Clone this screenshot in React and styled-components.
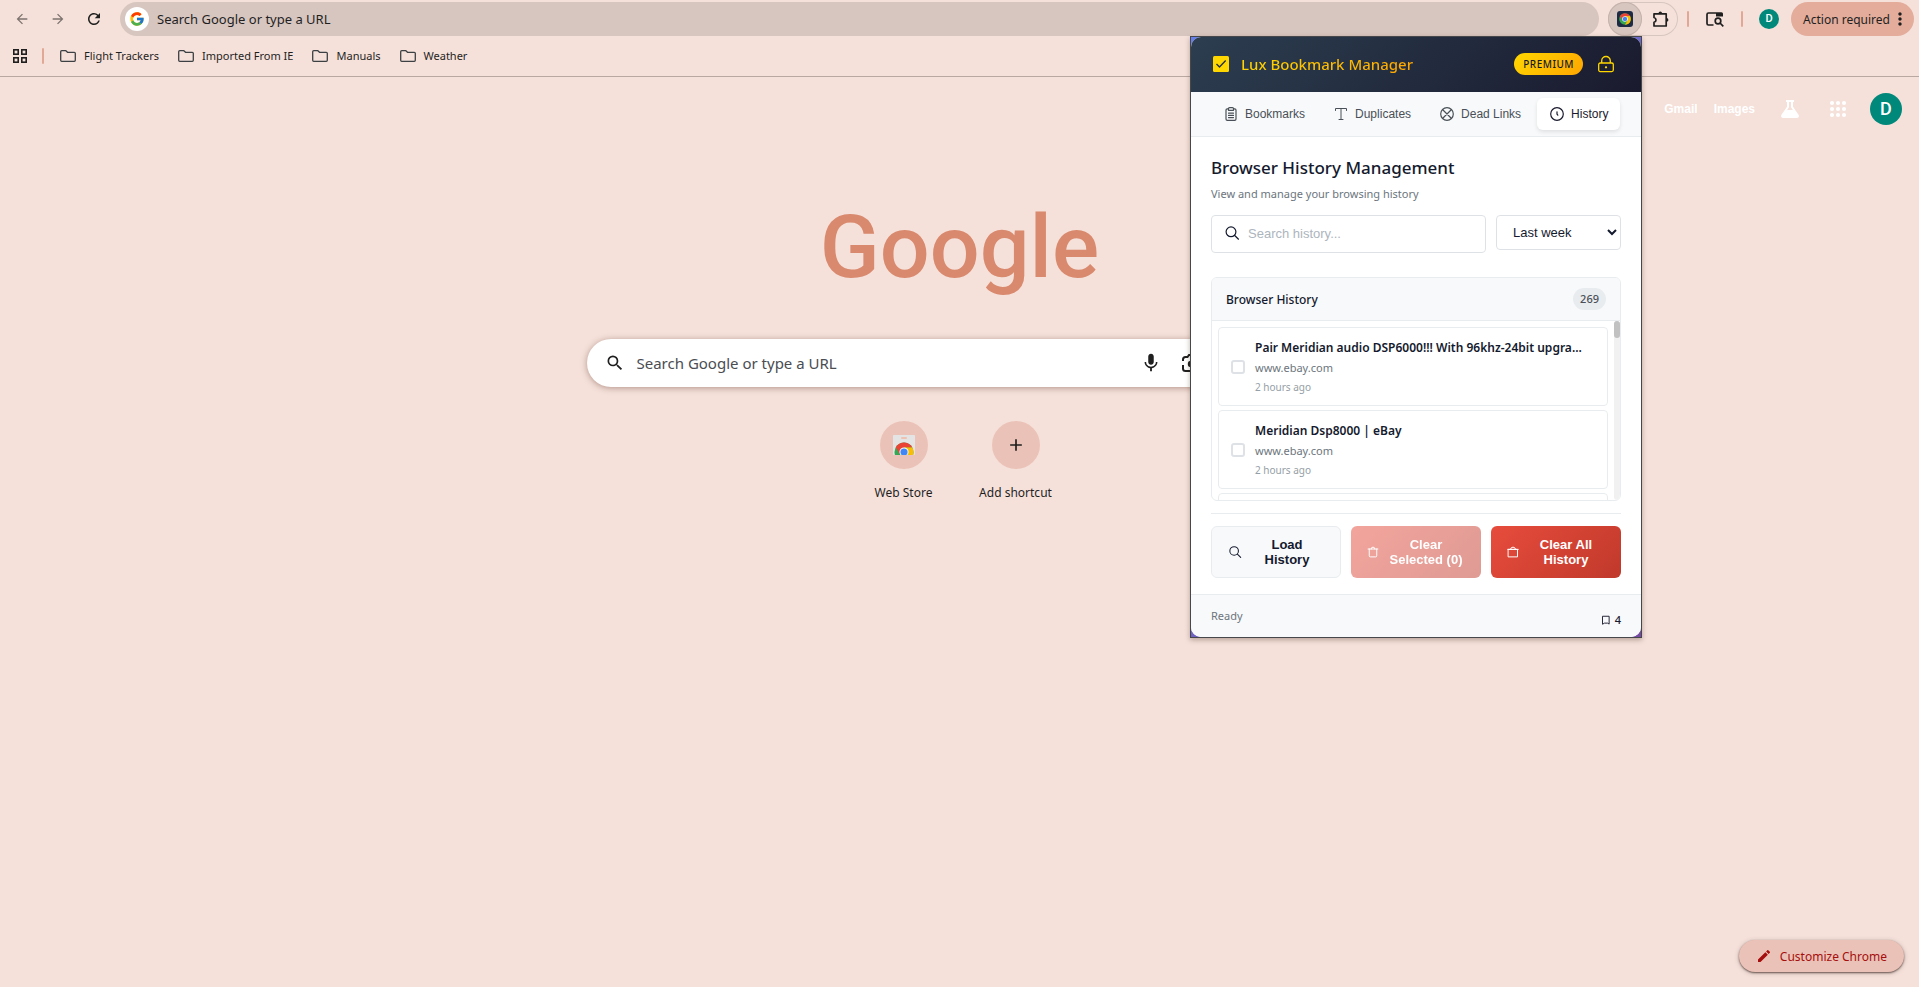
import React from "react";
import styled, { createGlobalStyle, css } from "styled-components";
import {
  MdArrowBack,
  MdArrowForward,
  MdRefresh,
  MdMoreVert,
  MdSearch,
  MdMic,
  MdAdd,
  MdEdit,
} from "react-icons/md";
import { FcGoogle } from "react-icons/fc";

const ui = `"Noto Sans", "Open Sans", sans-serif`;
const arial = `"Liberation Sans", Arial, sans-serif`;

const GlobalStyle = createGlobalStyle`
  * { box-sizing: border-box; }
  body { margin: 0; background: #f5e1da; font-family: ${ui}; color: #1f1f1f; }
  button, input, select { font: inherit; color: inherit; margin: 0; }
  button { border: 0; padding: 0; background: none; cursor: pointer; }
  a { color: inherit; text-decoration: none; }
  h1, h2, h3, p, ul { margin: 0; padding: 0; }
  ul { list-style: none; }
  svg { display: block; flex: none; }
`;

const Page = styled.div`
  position: relative;
  display: flex;
  flex-direction: column;
  min-height: 100vh;
`;

/* Browser chrome */

const Toolbar = styled.header`
  display: flex;
  align-items: center;
  height: 36px;
  padding: 2px 5px 0 12px;
`;

const NavButtons = styled.div`
  display: flex;
  gap: 16px;
  margin-right: 16px;
`;

const NavButton = styled.button`
  display: grid;
  place-items: center;
  width: 20px;
  height: 20px;
  color: ${(p) => (p.$dim ? "#7d736f" : "#1f1f1f")};
`;

const Omnibox = styled.label`
  flex: 1;
  display: flex;
  align-items: center;
  gap: 8px;
  height: 34px;
  padding: 0 5px;
  border-radius: 17px;
  background: #d7c6bf;
`;

const EngineBadge = styled.span`
  display: grid;
  place-items: center;
  width: 24px;
  height: 24px;
  border-radius: 50%;
  background: #fff;
`;

const OmniboxInput = styled.input`
  flex: 1;
  min-width: 0;
  border: 0;
  padding: 0;
  outline: 0;
  background: none;
  font-size: 13px;
  line-height: 20px;
  &::placeholder { color: #1f1f1f; opacity: 1; }
`;

const ToolbarEnd = styled.div`
  display: flex;
  align-items: center;
  margin-left: 9px;
`;

const ExtensionPill = styled.div`
  display: flex;
  gap: 2px;
  height: 34px;
  width: 70px;
  border-radius: 17px;
  box-shadow: inset 0 0 0 1px #d7c6bf;
`;

const ExtensionButton = styled.button`
  display: grid;
  place-items: center;
  width: 34px;
  height: 34px;
  border-radius: 50%;
  background: ${(p) => (p.$active ? "#d7c6bf" : "transparent")};
  box-shadow: ${(p) => (p.$active ? "inset 0 0 0 1px #c4b3ac" : "none")};
`;

const Divider = styled.span`
  width: 2px;
  height: 16px;
  border-radius: 1px;
  background: #e2a896;
`;

const ToolbarTools = styled.div`
  display: flex;
  align-items: center;
  gap: 9px;
  margin: 0 16px 0 9px;
`;

const ToolbarButton = styled.button`
  display: grid;
  place-items: center;
  width: 34px;
  height: 34px;
`;

const Avatar = styled.button`
  display: grid;
  place-items: center;
  width: ${(p) => p.$size}px;
  height: ${(p) => p.$size}px;
  border-radius: 50%;
  background: #00897b;
  color: #fff;
  font-family: Roboto, sans-serif;
  font-size: ${(p) => (p.$size > 24 ? 18 : 11)}px;
  font-weight: 500;
  line-height: 20px;
`;

const ActionButton = styled.button`
  display: flex;
  align-items: center;
  height: 34px;
  margin-left: 12px;
  padding: 0 4px 0 12px;
  border-radius: 17px;
  background: #e3ac9b;
  font-size: 12px;
  white-space: nowrap;
`;

const BookmarksBar = styled.nav`
  display: flex;
  align-items: center;
  height: 41px;
  padding: 0 12px;
  border-bottom: 1px solid #b9a8a2;
  & > ${Divider} { margin: 0 16px 0 14px; }
`;

const BookmarkList = styled.ul`
  display: flex;
  gap: 19px;
`;

const BookmarkLink = styled.a`
  display: flex;
  align-items: center;
  gap: 8px;
  line-height: 20px;
  font-size: 11px;
`;

/* New tab page */

const Main = styled.main`
  flex: 1;
  display: flex;
  flex-direction: column;
  align-items: center;
`;

const AccountBar = styled.nav`
  align-self: flex-end;
  display: flex;
  align-items: center;
  height: 64px;
  padding-right: 17px;
  color: #fff;
  font-family: ${arial};
  font-size: 12px;
  font-weight: 700;
  & > ${Avatar} { margin-left: 8px; }
`;

const AccountLinks = styled.div`
  display: flex;
  gap: 16px;
  margin-right: 11px;
`;

const AccountIcon = styled.button`
  display: grid;
  place-items: center;
  width: 48px;
  height: 40px;
`;

const Wordmark = styled.h1`
  margin-top: 48px;
  font-family: Roboto, ${arial};
  font-size: 88px;
  font-weight: 500;
  line-height: 116px;
  color: #d9896d;
`;

const SearchBox = styled.label`
  display: flex;
  align-items: center;
  width: 746px;
  max-width: 90%;
  height: 48px;
  margin-top: 34px;
  padding: 0 20px 0 18px;
  border-radius: 24px;
  background: #fff;
  box-shadow: 0 1px 6px rgba(110, 70, 55, 0.5);
`;

const SearchInput = styled.input`
  flex: 1;
  min-width: 0;
  margin-left: 12px;
  border: 0;
  padding: 0;
  outline: 0;
  font-size: 15px;
  line-height: 24px;
  &::placeholder { color: #4a4d52; opacity: 1; }
`;

const IconButton = styled.button`
  display: grid;
  place-items: center;
  width: 24px;
  height: 24px;
`;

const SearchTools = styled.div`
  display: flex;
  gap: 16px;
  margin-right: 110px;
`;

const Shortcuts = styled.div`
  display: flex;
  margin-top: 34px;
`;

const Shortcut = styled.button`
  display: flex;
  flex-direction: column;
  align-items: center;
  gap: 14px;
  width: 112px;
  font-size: 12px;
  line-height: 20px;
`;

const ShortcutIcon = styled.span`
  display: grid;
  place-items: center;
  width: 48px;
  height: 48px;
  border-radius: 50%;
  background: #ebc2b7;
`;

const CustomizeButton = styled.button`
  align-self: flex-end;
  display: flex;
  align-items: center;
  gap: 8px;
  height: 32px;
  margin: auto 15px 15px 0;
  padding: 0 17px;
  border-radius: 16px;
  background: #ebc2b7;
  box-shadow: 0 1px 2px rgba(60, 40, 35, 0.7), 0 1px 5px rgba(60, 40, 35, 0.25);
  color: #a50e0e;
  font-size: 12px;
`;

/* Extension popup */

const Popup = styled.aside`
  position: absolute;
  top: 36px;
  right: 277px;
  width: 452px;
  border: 1px solid #45474a;
  background: linear-gradient(135deg, #667eea 0%, #764ba2 100%);
  box-shadow: 0 2px 5px rgba(70, 40, 30, 0.35);
`;

const PopupBody = styled.div`
  overflow: hidden;
  border-radius: 10px;
  background: #fff;
  color: #141a2e;
`;

const PopupHeader = styled.header`
  display: flex;
  align-items: center;
  height: 55px;
  padding: 0 26px 2px 22px;
  background: linear-gradient(135deg, #2c3e50 0%, #1a1a2e 100%);
`;

const PopupTitle = styled.h2`
  flex: 1;
  margin-left: 12px;
  font-size: 15px;
  font-weight: 500;
  line-height: 24px;
  & > span {
    background: linear-gradient(135deg, #ffd700, #ffa500);
    background-clip: text;
    color: transparent;
  }
`;

const Premium = styled.span`
  margin-right: 14px;
  padding: 0 9px;
  border-radius: 11px;
  background: linear-gradient(135deg, #ffd700, #ffa500);
  font-size: 10px;
  font-weight: 500;
  line-height: 22px;
  letter-spacing: 0.5px;
`;

const Tabs = styled.nav`
  display: flex;
  gap: 4px;
  height: 45px;
  padding: 6px 20px;
  border-bottom: 1px solid #e9ecef;
  background: #f8f9fa;
`;

const Tab = styled.button`
  display: flex;
  align-items: center;
  gap: 6px;
  height: 32px;
  padding: 0 12px;
  border-radius: 6px;
  font-family: ${arial};
  font-size: 12px;
  color: #495057;
  ${(p) =>
    p.$active &&
    css`
      background: #fff;
      color: #1a1a2e;
      box-shadow: 0 2px 4px rgba(0, 0, 0, 0.1);
    `}
`;

const Panel = styled.section`
  padding: 18px 20px 16px;
`;

const PanelTitle = styled.h3`
  font-size: 17px;
  font-weight: 500;
  line-height: 26px;
`;

const PanelNote = styled.p`
  margin-top: 3px;
  font-size: 11px;
  line-height: 20px;
  color: #6c757d;
`;

const Filters = styled.div`
  display: flex;
  align-items: flex-start;
  gap: 10px;
  margin-top: 11px;
`;

const field = css`
  border: 1px solid #dee2e6;
  border-radius: 4px;
  background: #fff;
  font-family: ${arial};
  font-size: 13px;
`;

const HistorySearch = styled.label`
  ${field}
  flex: 1;
  display: flex;
  align-items: center;
  gap: 8px;
  height: 38px;
  padding: 0 12px 2px;
`;

const HistoryInput = styled.input`
  flex: 1;
  min-width: 0;
  border: 0;
  padding: 0;
  outline: 0;
  &::placeholder { color: #adb5bd; opacity: 1; }
`;

const Range = styled.select`
  ${field}
  width: 125px;
  height: 35px;
  padding: 0 0 0 12px;
`;

const Card = styled.div`
  margin-top: 24px;
  overflow: hidden;
  border: 1px solid #e9ecef;
  border-radius: 6px;
`;

const CardHeader = styled.div`
  display: flex;
  align-items: center;
  justify-content: space-between;
  height: 43px;
  padding: 0 14px;
  border-bottom: 1px solid #e9ecef;
  background: #f8f9fa;
  font-size: 12px;
  font-weight: 500;
`;

const Count = styled.span`
  padding: 0 7px;
  border-radius: 11px;
  background: #e9ecef;
  font-size: 11px;
  font-weight: 500;
  line-height: 22px;
  color: #495057;
`;

const CardBody = styled.div`
  display: flex;
  height: 179px;
`;

const Entries = styled.ul`
  flex: 1;
  min-width: 0;
  display: flex;
  flex-direction: column;
  gap: 4px;
  padding: 6px;
  overflow: hidden;
`;

const ScrollTrack = styled.div`
  width: 6px;
  border-radius: 3px;
  background: #f1f1f1;
`;

const ScrollThumb = styled.div`
  height: 17px;
  border-radius: 3px;
  background: #c1c1c1;
`;

const Entry = styled.li`
  flex: none;
  display: flex;
  align-items: center;
  gap: 10px;
  padding: 10px 12px 9px;
  border: 1px solid #e9ecef;
  border-radius: 4px;
`;

const EntryCheck = styled.input`
  flex: none;
  appearance: none;
  width: 14px;
  height: 14px;
  border: 2px solid #dee2e6;
  border-radius: 3px;
`;

const EntryText = styled.label`
  flex: 1;
  min-width: 0;
  display: flex;
  flex-direction: column;
  line-height: 20px;
`;

const EntryTitle = styled.span`
  white-space: nowrap;
  font-size: 12px;
  font-weight: 600;
`;

const EntryHost = styled.span`
  font-size: 11px;
  color: #6c757d;
`;

const EntryTime = styled.span`
  font-size: 10px;
  line-height: 18px;
  color: #95a0a6;
`;

const Actions = styled.div`
  display: grid;
  grid-template-columns: repeat(3, 1fr);
  gap: 10px;
  margin-top: 12px;
  padding-top: 12px;
  border-top: 1px solid #e9ecef;
`;

const ActionCard = styled.button`
  display: flex;
  align-items: center;
  gap: 8px;
  height: 52px;
  padding: 0 16px;
  border-radius: 6px;
  font-family: ${arial};
  font-size: 13px;
  font-weight: 700;
  line-height: 15px;
  & > span { flex: 1; }
  ${(p) =>
    p.$danger
      ? css`
          background: linear-gradient(135deg, #e74c3c, #c0392b);
          color: #fff;
        `
      : css`
          border: 1px solid #e9ecef;
          background: #f8f9fa;
        `}
  &:disabled { opacity: 0.5; }
`;

const PopupFooter = styled.footer`
  display: flex;
  justify-content: space-between;
  height: 43px;
  padding: 11px 20px 0;
  border-top: 1px solid #e9ecef;
  background: #f8f9fa;
  font-size: 11px;
  line-height: 20px;
  color: #6c757d;
`;

const SavedCount = styled.span`
  display: flex;
  align-items: center;
  align-self: flex-end;
  gap: 4px;
  padding-bottom: 7px;
  font-weight: 500;
  color: #1a1a2e;
`;

/* Drawings */

const Line = ({ size = 16, width = 1, children }) => (
  <svg
    width={size}
    height={size}
    viewBox="0 0 16 16"
    fill="none"
    stroke="currentColor"
    strokeWidth={width}
    strokeLinecap="round"
    strokeLinejoin="round"
    aria-hidden="true"
  >
    {children}
  </svg>
);

const GridIcon = () => (
  <svg width="16" height="16" viewBox="0 0 16 16" fill="none" stroke="#1f1f1f" strokeWidth="1.6" aria-hidden="true">
    <rect x="1.8" y="1.8" width="4.4" height="4.4" />
    <rect x="9.8" y="1.8" width="4.4" height="4.4" />
    <rect x="1.8" y="9.8" width="4.4" height="4.4" />
    <rect x="9.8" y="9.8" width="4.4" height="4.4" />
  </svg>
);

const DotsIcon = () => (
  <svg width="24" height="24" viewBox="0 0 24 24" fill="currentColor" aria-hidden="true">
    {[6, 12, 18].map((y) => [6, 12, 18].map((x) => <circle key={`${x}${y}`} cx={x} cy={y} r="2.1" />))}
  </svg>
);

const FlaskIcon = () => (
  <svg width="24" height="24" viewBox="0 0 24 24" fill="none" stroke="currentColor" strokeWidth="2" strokeLinejoin="round" aria-hidden="true">
    <path d="M8 4h8M10 4v6L4.300 18.200q-.8 1.800 1 1.800h13.400q1.800 0 1-1.800L14 10V4" />
    <path d="M9 14h6l4 5H5z" fill="currentColor" />
  </svg>
);

const FolderIcon = () => (
  <svg width="16" height="16" viewBox="0 0 16 16" fill="none" stroke="#3c4043" strokeWidth="1.3" strokeLinejoin="round" aria-hidden="true">
    <path d="M1.700 2.700h4.200l1.600 1.600h6.800q1 0 1 1v7q0 1-1 1H1.700q-1 0-1-1V3.700q0-1 1-1z" />
  </svg>
);

const PuzzleIcon = () => (
  <svg width="18" height="18" viewBox="0 0 18 18" fill="none" stroke="#1f1f1f" strokeWidth="1.7" strokeLinejoin="round" aria-hidden="true">
    <path d="M2 3.800h12.200v12.200H2v-3.700q2-.5 2-2.400t-2-2.400z" />
    <path d="M6.500 3.400a1.800 1.800 0 0 1 3.600 0zM14.600 8.100a1.800 1.800 0 0 1 0 3.600z" fill="#1f1f1f" stroke="none" />
  </svg>
);

const ChromeDisc = ({ x, y, r }) => (
  <g transform={`translate(${x} ${y}) scale(${r / 10})`}>
    <circle r="10" fill="#34a853" />
    <path d="M0-5H8.660A10 10 0 0 1 0 10L4.330 2.500z" fill="#fbbc04" />
    <path d="M-8.660-5A10 10 0 0 1 8.660-5H0L-4.330 2.500z" fill="#ea4335" />
    <circle r="4.800" fill="#fff" />
    <circle r="3.800" fill="#4285f4" />
  </g>
);

const LuxIcon = () => (
  <svg width="16" height="16" viewBox="0 0 16 16" aria-hidden="true">
    <rect width="16" height="16" rx="3" fill="#1d2b45" />
    <ChromeDisc x={8} y={8} r={5.8} />
  </svg>
);

const StoreIcon = () => (
  <svg width="24" height="24" viewBox="0 0 24 24" aria-hidden="true">
    <clipPath id="bag"><rect x="1" y="2" width="22" height="20" rx="1" /></clipPath>
    <g clipPath="url(#bag)">
      <rect x="1" y="2" width="22" height="20" fill="#e4e4e4" />
      <rect x="9" y="4" width="6" height="2" rx="1" fill="#f0c0b0" />
      <ChromeDisc x={12} y={19} r={9.500} />
    </g>
  </svg>
);

const TabSearchIcon = () => (
  <svg width="20" height="20" viewBox="0 0 20 20" fill="none" stroke="#1f1f1f" strokeWidth="1.7" aria-hidden="true">
    <path d="M8.500 16H3.500a1.500 1.500 0 0 1-1.500-1.500v-9A1.500 1.500 0 0 1 3.500 4H11" />
    <path d="M11 3.200h5.500a1.500 1.500 0 0 1 1.500 1.500V7.500H11z" fill="#1f1f1f" stroke="none" />
    <circle cx="13" cy="12" r="2.800" />
    <path d="M15 14l3.300 3.300" />
  </svg>
);

const LensIcon = () => (
  <svg width="24" height="24" viewBox="0 0 24 24" fill="none" stroke="#1f1f1f" strokeWidth="2" aria-hidden="true">
    <path d="M4 10V8.500A2.500 2.500 0 0 1 6.500 6h2L10 4h4l1.500 2h2A2.500 2.500 0 0 1 20 8.500V10M4 14v3.500A2.500 2.500 0 0 0 6.500 20H13" />
    <circle cx="12" cy="13" r="3.200" fill="#1f1f1f" stroke="none" />
    <circle cx="18" cy="18" r="1.600" fill="#1f1f1f" stroke="none" />
  </svg>
);

const CheckLogo = () => (
  <svg width="16" height="16" viewBox="0 0 16 16" aria-hidden="true">
    <rect width="16" height="16" rx="1.500" fill="#ffd700" />
    <path d="M3.500 8l3 3 6.200-6.400" fill="none" stroke="#22304a" strokeWidth="1.400" />
  </svg>
);

const LockIcon = () => (
  <svg width="18" height="18" viewBox="0 0 18 18" fill="none" stroke="#ffd700" strokeWidth="1.300" strokeLinejoin="round" aria-hidden="true">
    <rect x="1.700" y="8" width="14.600" height="8.600" rx="1.500" />
    <path d="M4.700 8V5.800a4.300 4.300 0 0 1 8.600 0V8" />
    <circle cx="9" cy="12.300" r="0.500" fill="#ffd700" />
  </svg>
);

const ClipboardIcon = () => (
  <Line width={1.200}>
    <path d="M5.500 2.800H4.300q-1.300 0-1.300 1.300v9q0 1.300 1.300 1.300h7.400q1.300 0 1.300-1.300v-9q0-1.300-1.300-1.300h-1.200" />
    <path d="M5.500 4.300V2.600q0-1 1-1h3q1 0 1 1v1.700zM5.500 7.200h5M5.500 9.400h5M5.500 11.600h5" />
  </Line>
);

const LetterTIcon = () => (
  <Line>
    <path d="M2.500 4.500v-2h11v2M8 2.500v11M6 13.500h4" />
  </Line>
);

const CrossCircleIcon = () => (
  <Line width={1.200}>
    <circle cx="8" cy="8" r="6.300" />
    <path d="M4 4l8 8M12 4l-8 8" />
  </Line>
);

const ClockIcon = () => (
  <Line width={1.200}>
    <circle cx="8" cy="8" r="6.300" />
    <path d="M8 5.800v2.400l.8 1" />
  </Line>
);

const LoupeIcon = ({ size }) => (
  <Line size={size} width={1.200}>
    <circle cx="7" cy="6.800" r="4.900" />
    <path d="M10.700 10.500l3.800 3.700" />
  </Line>
);

const TrashIcon = () => (
  <Line size={12} width={1.300}>
    <path d="M1.500 4h13M3 4v9q0 1.500 1.500 1.500h7q1.500 0 1.500-1.500V4M5.500 4q0-2.500 2.500-2.500t2.500 2.500" />
  </Line>
);

const BagIcon = () => (
  <Line size={12} width={1.300}>
    <path d="M2 4.500h12v10H2zM1 4.500h14M4.500 4.500q.5-3 3.500-3t3.500 3" />
  </Line>
);

const RibbonIcon = () => (
  <Line size={10} width={1.500}>
    <path d="M3 2h10v12.500l-2.500-1.500h-5L3 14.500z" />
  </Line>
);

const bookmarks = ["Flight Trackers", "Imported From IE", "Manuals", "Weather"];

const tabs = [
  { label: "Bookmarks", Icon: ClipboardIcon },
  { label: "Duplicates", Icon: LetterTIcon },
  { label: "Dead Links", Icon: CrossCircleIcon },
  { label: "History", Icon: ClockIcon, active: true },
];

const entries = [
  { title: "Pair Meridian audio DSP6000!!! With 96khz-24bit upgra...", host: "www.ebay.com", time: "2 hours ago" },
  { title: "Meridian Dsp8000 | eBay", host: "www.ebay.com", time: "2 hours ago" },
];

const HistoryPopup = () => (
  <Popup aria-label="Lux Bookmark Manager">
    <PopupBody>
      <PopupHeader>
        <CheckLogo />
        <PopupTitle><span>Lux Bookmark Manager</span></PopupTitle>
        <Premium>PREMIUM</Premium>
        <button aria-label="Lock"><LockIcon /></button>
      </PopupHeader>
      <Tabs>
        {tabs.map(({ label, Icon, active }) => (
          <Tab key={label} $active={active}>
            <Icon />
            {label}
          </Tab>
        ))}
      </Tabs>
      <Panel>
        <PanelTitle>Browser History Management</PanelTitle>
        <PanelNote>View and manage your browsing history</PanelNote>
        <Filters>
          <HistorySearch>
            <LoupeIcon />
            <HistoryInput aria-label="Search history" placeholder="Search history..." />
          </HistorySearch>
          <Range aria-label="Time range" defaultValue="week">
            <option value="week">Last week</option>
          </Range>
        </Filters>
        <Card>
          <CardHeader>
            Browser History
            <Count>269</Count>
          </CardHeader>
          <CardBody>
            <Entries>
              {entries.map((e, i) => (
                <Entry key={e.title}>
                  <EntryCheck type="checkbox" id={`entry-${i}`} />
                  <EntryText htmlFor={`entry-${i}`}>
                    <EntryTitle>{e.title}</EntryTitle>
                    <EntryHost>{e.host}</EntryHost>
                    <EntryTime>{e.time}</EntryTime>
                  </EntryText>
                </Entry>
              ))}
              <Entry aria-hidden="true" />
            </Entries>
            <ScrollTrack><ScrollThumb /></ScrollTrack>
          </CardBody>
        </Card>
        <Actions>
          <ActionCard><LoupeIcon size={14} /><span>Load History</span></ActionCard>
          <ActionCard $danger disabled><TrashIcon /><span>Clear Selected (0)</span></ActionCard>
          <ActionCard $danger><BagIcon /><span>Clear All History</span></ActionCard>
        </Actions>
      </Panel>
      <PopupFooter>
        <span>Ready</span>
        <SavedCount><RibbonIcon />4</SavedCount>
      </PopupFooter>
    </PopupBody>
  </Popup>
);

export default function App() {
  return (
    <Page>
      <GlobalStyle />
      <Toolbar>
        <NavButtons>
          <NavButton $dim aria-label="Back"><MdArrowBack size={16} /></NavButton>
          <NavButton $dim aria-label="Forward"><MdArrowForward size={16} /></NavButton>
          <NavButton aria-label="Reload"><MdRefresh size={18} /></NavButton>
        </NavButtons>
        <Omnibox>
          <EngineBadge><FcGoogle size={16} /></EngineBadge>
          <OmniboxInput aria-label="Address" placeholder="Search Google or type a URL" />
        </Omnibox>
        <ToolbarEnd>
          <ExtensionPill>
            <ExtensionButton $active aria-label="Lux Bookmark Manager"><LuxIcon /></ExtensionButton>
            <ExtensionButton aria-label="Extensions"><PuzzleIcon /></ExtensionButton>
          </ExtensionPill>
          <ToolbarTools>
            <Divider />
            <ToolbarButton aria-label="Search tabs"><TabSearchIcon /></ToolbarButton>
            <Divider />
          </ToolbarTools>
          <Avatar $size={20} aria-label="Profile">D</Avatar>
          <ActionButton>Action required<MdMoreVert size={20} /></ActionButton>
        </ToolbarEnd>
      </Toolbar>
      <BookmarksBar>
        <button aria-label="Apps"><GridIcon /></button>
        <Divider />
        <BookmarkList>
          {bookmarks.map((name) => (
            <li key={name}>
              <BookmarkLink href="#"><FolderIcon />{name}</BookmarkLink>
            </li>
          ))}
        </BookmarkList>
      </BookmarksBar>
      <Main>
        <AccountBar>
          <AccountLinks>
            <a href="#">Gmail</a>
            <a href="#">Images</a>
          </AccountLinks>
          <AccountIcon aria-label="Labs"><FlaskIcon /></AccountIcon>
          <AccountIcon aria-label="Google apps"><DotsIcon /></AccountIcon>
          <Avatar $size={32} aria-label="Account">D</Avatar>
        </AccountBar>
        <Wordmark>Google</Wordmark>
        <SearchBox>
          <MdSearch size={20} />
          <SearchInput aria-label="Search" placeholder="Search Google or type a URL" />
          <SearchTools>
            <IconButton aria-label="Voice search"><MdMic size={22} /></IconButton>
            <IconButton aria-label="Image search"><LensIcon /></IconButton>
          </SearchTools>
        </SearchBox>
        <Shortcuts>
          <Shortcut><ShortcutIcon><StoreIcon /></ShortcutIcon>Web Store</Shortcut>
          <Shortcut><ShortcutIcon><MdAdd size={20} /></ShortcutIcon>Add shortcut</Shortcut>
        </Shortcuts>
        <CustomizeButton><MdEdit size={16} />Customize Chrome</CustomizeButton>
      </Main>
      <HistoryPopup />
    </Page>
  );
}
